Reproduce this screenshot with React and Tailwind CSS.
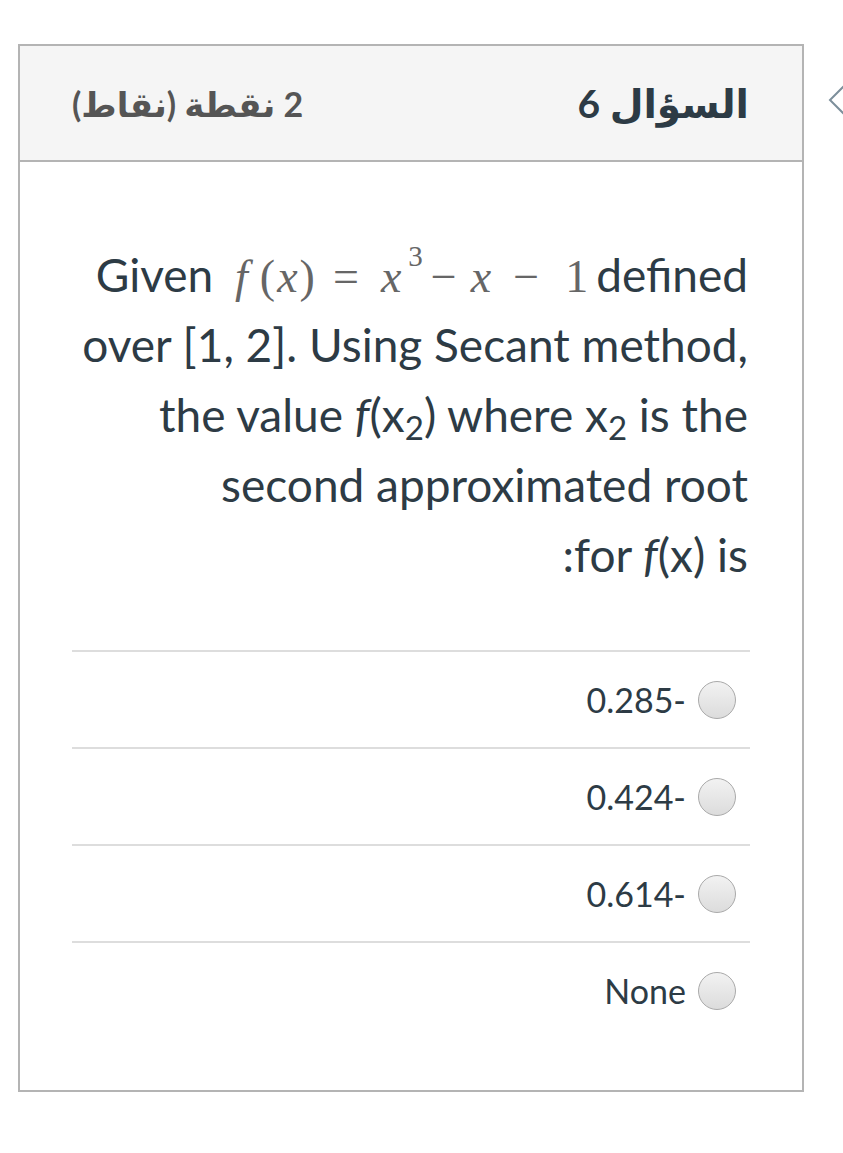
import React from "react";

const options = ["-0.285", "-0.424", "-0.614", "None"];

const Radio = () => (
  <span className="w-[38px] h-[38px] rounded-full border border-[#a9a9a9] bg-gradient-to-b from-[#f2f2f2] to-[#dcdcdc] shrink-0" />
);

const MathExpr = () => (
  <span
    dir="ltr"
    className="inline-block text-[#666] font-['Liberation_Serif',serif] text-[46px] leading-none ml-[10px] mr-[8px]"
  >
    <i>f</i>
    <span className="ml-[12px]">(</span>
    <i className="px-[2px]">x</i>
    <span>)</span>
    <span className="ml-[18px] mr-[22px]">=</span>
    <i>x</i>
    <span className="text-[29px] relative -top-[26px] ml-[7px]">3</span>
    <span className="ml-[8px] mr-[14px]">−</span>
    <i>x</i>
    <span className="ml-[22px] mr-[26px]">−</span>
    <span>1</span>
  </span>
);

export default function App() {
  return (
    <div className="min-h-[1153px] bg-white pt-[44px] overflow-hidden font-['Lato','DejaVu_Sans',sans-serif] text-[#2d3b45]">
      <div className="flex items-start">
        <div dir="rtl" className="ml-[18px] w-[786px] shrink-0 border-2 border-[#b4b4b4]">
          {/* Header */}
          <div className="h-[116px] bg-[#f5f5f5] border-b-2 border-[#b4b4b4] flex items-center justify-between pr-[53px] pl-[52px]">
            <span className="text-[39px] font-bold text-[#2d3b45]">السؤال 6</span>
            <span className="text-[34px] font-bold text-[#555]">2 نقطة (نقاط)</span>
          </div>

          {/* Body */}
          <div className="pt-[78px] pb-[52px] px-[52px]">
            <p className="text-[46px] leading-[70px] text-right pr-[2px]">
              Given <MathExpr />defined over [1, 2]. Using Secant method, the value{" "}
              <i>f</i>(x<sub className="text-[33px]">2</sub>) where x
              <sub className="text-[33px]">2</sub> is the second approximated root
              <br />
              for <i>f</i>(x) is:
            </p>

            <div className="mt-[60px]">
              {options.map((opt) => (
                <div
                  key={opt}
                  className="h-[97px] border-t-2 border-[#dddddd] flex items-center gap-[12px] pr-[14px]"
                >
                  <Radio />
                  <span className="text-[34px] text-[#2d3b45]">{opt}</span>
                </div>
              ))}
            </div>
          </div>
        </div>

        {/* side chevron */}
        <svg className="mt-[34px] ml-[22px] shrink-0" width="24" height="44" viewBox="0 0 24 44">
          <path d="M22 4 L4 22 L22 40" fill="none" stroke="#7d8f9b" strokeWidth="2" />
        </svg>
      </div>
    </div>
  );
}
